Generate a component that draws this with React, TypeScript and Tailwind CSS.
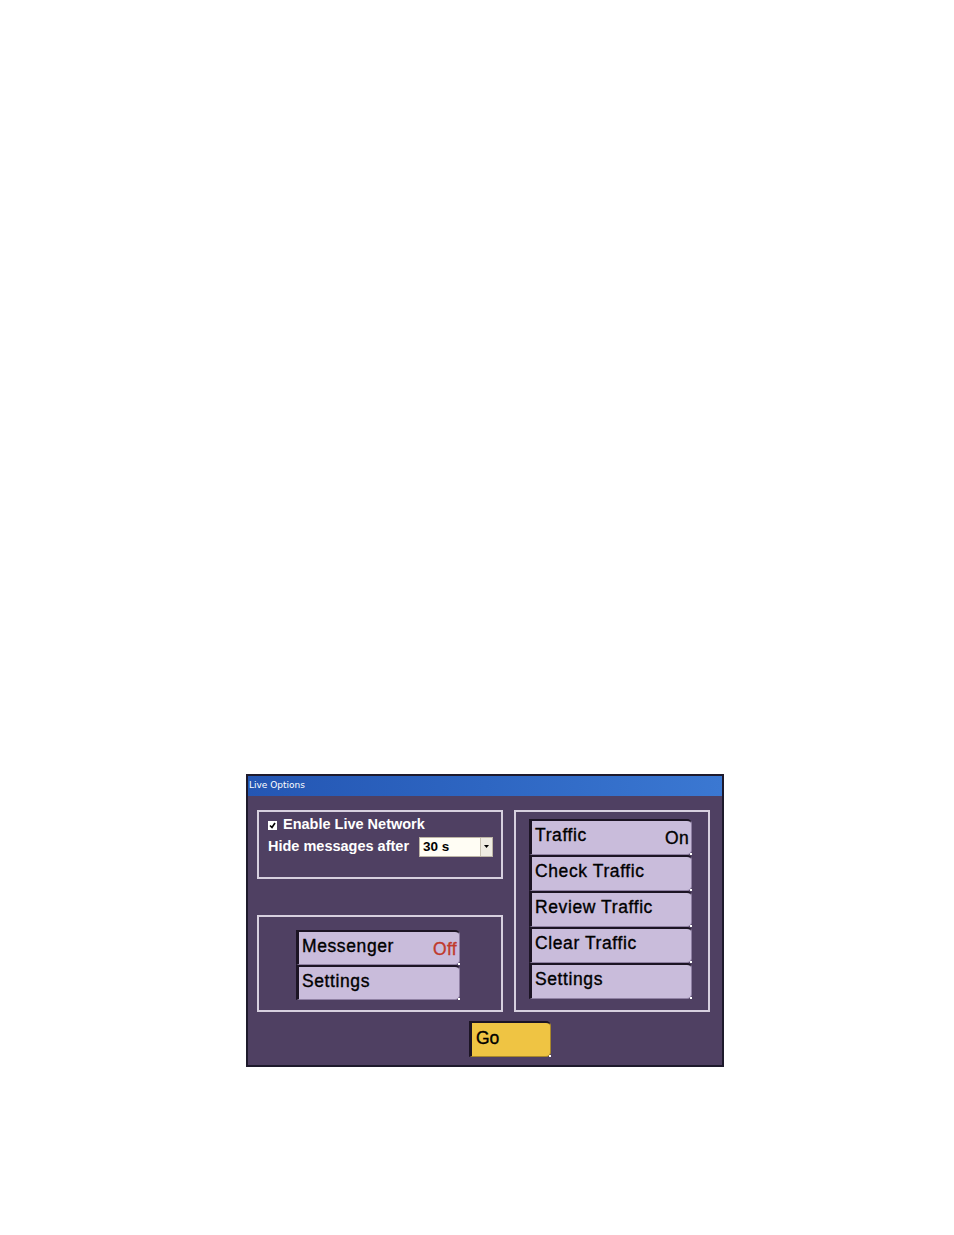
import React from 'react';

const font = { fontFamily: '"Liberation Sans", Arial, sans-serif' };

const PanelButton: React.FC<{ label: string; state?: string; stateClass?: string; h?: string }> = ({ label, state, stateClass, h = 'h-[36px]' }) => (
  <div className={`${h} relative flex items-center justify-between bg-[#c9bcdb] border-l-[3px] border-t-2 border-[#1c1424] border-r border-r-[#8f80a3] border-b border-b-[#8f80a3] rounded-tr-[5px] rounded-br-[5px] pl-[3px] pr-[2px] pb-[3px]`}>
    <span className="text-[17.5px] text-black leading-none tracking-[0.6px] [-webkit-text-stroke:0.35px_black]">{label}</span>
    {state && <span className={`text-[17.5px] leading-none mt-[6px] tracking-[0.3px] [-webkit-text-stroke:0.35px_currentColor] ${stateClass}`}>{state}</span>}
    <span className="absolute right-[-1px] bottom-[-1px] w-[2px] h-[2px] bg-white" />
  </div>
);

export default function App() {
  return (
    <div className="w-[954px] h-[1235px] bg-white pt-[774px] pl-[246px]" style={font}>
      <div className="w-[478px] h-[293px] border-2 border-[#1e1a2c] bg-[#4f4062] flex flex-col">
        {/* Title bar */}
        <div className="h-[20px] bg-gradient-to-r from-[#2456b3] via-[#2e66c2] to-[#3b78d2] flex items-center px-[1px]">
          <span className="text-[9px] text-white" style={{ fontFamily: '"DejaVu Sans", sans-serif' }}>Live Options</span>
        </div>

        <div className="flex gap-[11px] pt-[14px] pl-[9px]">
          {/* Left column */}
          <div className="flex flex-col gap-[36px] w-[246px]">
            <div className="h-[69px] border-2 border-[#d7d0df] pt-[5px] pl-[9px] text-white font-bold text-[14.5px]">
              <div className="flex items-center gap-[6px] h-[16px]">
                <span className="w-[9px] h-[9px] bg-white flex items-center justify-center">
                  <svg width="7" height="7" viewBox="0 0 7 7"><path d="M1 3.5 L3 5.5 L6 1" stroke="#000" strokeWidth="1.6" fill="none" /></svg>
                </span>
                <span>Enable Live Network</span>
              </div>
              <div className="flex items-center gap-[10px] mt-[3px]">
                <span>Hide messages after</span>
                <div className="w-[74px] h-[20px] bg-[#fffdf4] border border-[#bdb6a6] flex items-center justify-between pl-[3px]">
                  <span className="text-black text-[13.5px]">30 s</span>
                  <span className="w-[12px] h-[18px] bg-[#efece2] border-l border-[#c8c2b2] flex items-center justify-center">
                    <svg width="5" height="3" viewBox="0 0 5 3"><path d="M0 0 H5 L2.5 3 Z" fill="#000" /></svg>
                  </span>
                </div>
              </div>
            </div>
            <div className="h-[97px] border-2 border-[#d7d0df] pt-[13px] pl-[37px]">
              <div className="w-[164px] flex flex-col">
                <PanelButton label="Messenger" state="Off" stateClass="text-[#c0392b]" h="h-[35px]" />
                <PanelButton label="Settings" h="h-[35px]" />
              </div>
            </div>
          </div>

          {/* Right column */}
          <div className="w-[196px] h-[202px] border-2 border-[#d7d0df] pt-[7px] pl-[13px]">
            <div className="w-[163px] flex flex-col">
              <PanelButton label="Traffic" state="On" stateClass="text-black" />
              <PanelButton label="Check Traffic" />
              <PanelButton label="Review Traffic" />
              <PanelButton label="Clear Traffic" />
              <PanelButton label="Settings" />
            </div>
          </div>
        </div>

        <div className="flex pt-[9px] pl-[221px]">
          <div className="relative w-[82px] h-[36px] bg-[#efc443] border-l-[3px] border-t-2 border-[#1c1424] border-r border-r-[#a8872a] border-b border-b-[#a8872a] rounded-tr-[5px] rounded-br-[5px] flex items-center pl-[4px] pb-[2px]">
            <span className="text-[17.5px] text-black leading-none [-webkit-text-stroke:0.35px_black]">Go</span>
            <span className="absolute right-[-1px] bottom-[-1px] w-[2px] h-[2px] bg-white" />
          </div>
        </div>
      </div>
    </div>
  );
}
